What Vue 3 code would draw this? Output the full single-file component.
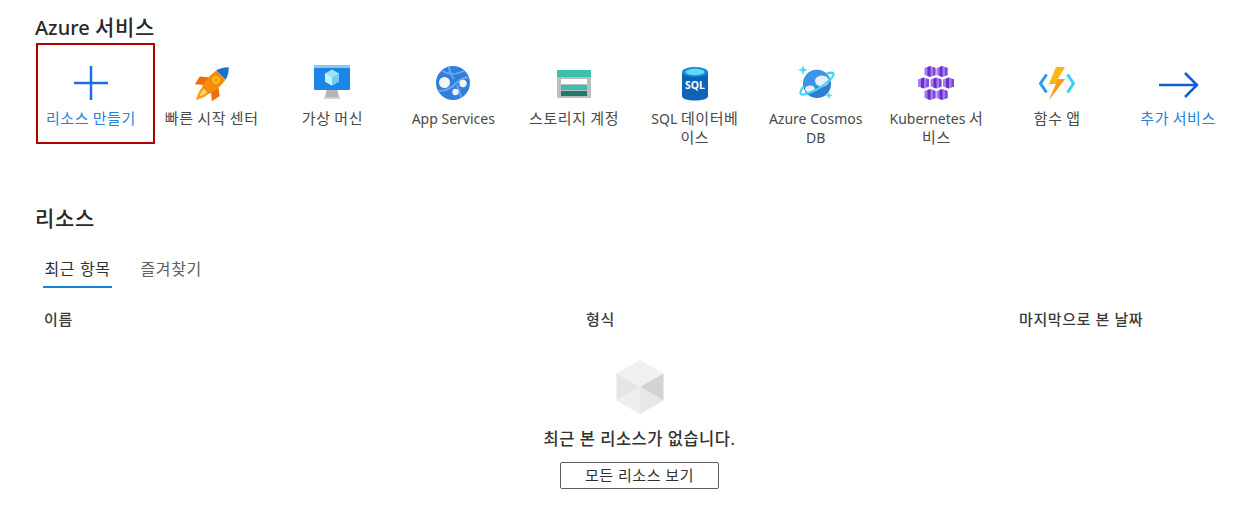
<script setup>
const split = (text) =>
  text.split(/([가-힣]+)/).filter(Boolean).map((t) => ({ t, ko: /[가-힣]/.test(t) }))

const title = split('Azure 서비스')
const services = [
  { key: 'create', lines: ['리소스 만들기'], link: true },
  { key: 'rocket', lines: ['빠른 시작 센터'] },
  { key: 'vm', lines: ['가상 머신'] },
  { key: 'app', lines: ['App Services'] },
  { key: 'storage', lines: ['스토리지 계정'] },
  { key: 'sql', lines: ['SQL 데이터베', '이스'] },
  { key: 'cosmos', lines: ['Azure Cosmos', 'DB'] },
  { key: 'k8s', lines: ['Kubernetes 서', '비스'] },
  { key: 'func', lines: ['함수 앱'] },
  { key: 'more', lines: ['추가 서비스'], link: true }
].map((s) => ({ ...s, rows: s.lines.map(split) }))

const pods = [
  [12, 6.5], [24, 6.5], [5.500, 18], [18, 18], [30.500, 18], [12, 29.500], [24, 29.500]
]
</script>

<template>
  <main class="page">
    <h2 class="heading"><span v-for="(p, i) in title" :key="i" :class="{ ko: p.ko }">{{ p.t }}</span></h2>
    <div class="services">
      <div v-for="s in services" :key="s.key" class="service" :class="{ link: s.link, first: s.key === 'create' }">
        <svg class="icon" viewBox="0 0 36 36" width="36" height="36">
          <template v-if="s.key === 'create'">
            <path d="M18 1v34M1 18h34" stroke="#1a6fe0" stroke-width="2.500" fill="none" />
          </template>
          <template v-else-if="s.key === 'rocket'">
            <g transform="translate(18.500 18.500) rotate(45)">
              <path d="M-6.500-2L-14 4l2 9 7-6z" fill="#ec6f0c" />
              <path d="M6.500-2L14 4l-2 9-7-6z" fill="#ec6f0c" />
              <path d="M-4.500 9C-5 15-1.500 20 0 24c1.500-4 5-9 4.500-15z" fill="#f9a31a" />
              <path d="M-2 9c0 4 1 7 2 9 1-2 2-5 2-9z" fill="#fde27a" />
              <path d="M-6.500-12C-8-4-7 4-5 10H5C7 4 8-4 6.500-12z" fill="#f78a0a" />
              <path d="M0-23c4 4 6 8 6.500 11h-13C-6-15-4-19 0-23z" fill="#1673c9" />
              <circle cx="0" cy="-5" r="3.800" fill="#fcc419" />
              <circle cx="0" cy="-5" r="2.100" fill="#f59a0c" />
            </g>
          </template>
          <template v-else-if="s.key === 'vm'">
            <path d="M12.500 25h11l1.500 7H11z" fill="#b5b5b5" />
            <path d="M10 32h16v2H10z" fill="#d2d2d2" />
            <rect x="0" y="0" width="36" height="25" rx="1" fill="#1b86e8" />
            <path d="M0 1a1 1 0 0 1 1-1h34a1 1 0 0 1 1 1v2H0z" fill="#8cc5f5" />
            <path d="M18 4.500l7 4v8l-7 4-7-4v-8z" fill="#9fe3fb" />
            <path d="M18 12.500v8l-7-4v-8z" fill="#c9f1fd" />
            <path d="M18 12.500v8l7-4v-8z" fill="#6fcdf3" />
          </template>
          <template v-else-if="s.key === 'app'">
            <circle cx="18" cy="18" r="17" fill="#2f80dd" />
            <path d="M7 6c7 4 13 4 22 0M14 2c0 5 3 9 5 12M3 26c8 0 12-2 16-6 4-4 9-7 14-8M22 20c2 5 4 9 4 13" stroke="#6ea9ea" stroke-width="1.800" fill="none" />
            <circle cx="9.500" cy="17.500" r="5.500" fill="#f4f4f4" />
            <circle cx="28" cy="18.500" r="3.700" fill="#f4f4f4" />
            <circle cx="20.500" cy="27" r="3.200" fill="#f4f4f4" />
          </template>
          <template v-else-if="s.key === 'storage'">
            <path d="M1 6a1 1 0 0 1 1-1h32a1 1 0 0 1 1 1v26a1 1 0 0 1-1 1H2a1 1 0 0 1-1-1z" fill="#bdbdbd" />
            <path d="M1 6a1 1 0 0 1 1-1h32a1 1 0 0 1 1 1v6H1z" fill="#3ac1ad" />
            <rect x="5" y="14" width="26" height="5" fill="#fff" />
            <rect x="5" y="20" width="26" height="5" fill="#3ac1ad" />
            <rect x="5" y="26" width="26" height="5" fill="#23776c" />
          </template>
          <template v-else-if="s.key === 'sql'">
            <path d="M5 7v24c0 3 6 4.500 13 4.500S31 34 31 31V7z" fill="#0f62b5" />
            <ellipse cx="18" cy="7" rx="13" ry="5" fill="#1e88d8" />
            <ellipse cx="18" cy="7" rx="9.500" ry="3.200" fill="#5cdcf5" />
            <text x="18" y="24" class="sql" text-anchor="middle">SQL</text>
          </template>
          <template v-else-if="s.key === 'cosmos'">
            <circle cx="19" cy="19" r="14" fill="#2a7ed4" />
            <path d="M7 12c3-6 9-8 15-7 6 2 10 7 10 10-8 6-17 9-25 9-2-4-2-8 0-12z" fill="#3b96e6" />
            <ellipse cx="24" cy="16" rx="7" ry="5.500" fill="#e9eef4" />
            <ellipse cx="12" cy="24" rx="5" ry="3.500" fill="#e9eef4" />
            <path d="M28 9c4-1.500 7-1.500 7.500-.5 1 2.500-6 10-15 15S4 31 2.500 28.500C2 27 3.500 24 6 21" stroke="#42d2f5" stroke-width="2.200" fill="none" />
            <path d="M5 0l1.300 3.700L10 5 6.300 6.300 5 10 3.700 6.300 0 5l3.700-1.300z" fill="#4fd6f7" />
            <path d="M31 27l1 2.600 2.600 1-2.600 1-1 2.400-1-2.400-2.600-1 2.600-1z" fill="#4fd6f7" />
          </template>
          <template v-else-if="s.key === 'k8s'">
            <g v-for="p in pods" :key="p[0] + '-' + p[1]" :transform="`translate(${p[0] - 5.5} ${p[1] - 5.5})`">
              <path d="M0 2l6-2 5 2v7l-5 2-6-2z" fill="#a67af4" />
              <path d="M3 1l3-1v11l-3-1z" fill="#6a2fc4" />
              <path d="M8.500 1l2.500 1v7l-2.500 1z" fill="#7d47d8" />
            </g>
          </template>
          <template v-else-if="s.key === 'func'">
            <path d="M7.500 9.500L1.500 18.500l6 9" stroke="#2d9be8" stroke-width="3" fill="none" />
            <path d="M28.500 9.500l6 9-6 9" stroke="#36d1f5" stroke-width="3" fill="none" />
            <path d="M17 2h9l-7 12h7L10 35l7-16h-7z" fill="#fcb614" />
            <path d="M19 14h7L10 35l7-16z" fill="#f78d1e" opacity=".7" />
          </template>
          <template v-else>
            <path d="M-1 20h38M25 8l12 12-12 12" stroke="#0f5fd8" stroke-width="2.500" fill="none" />
          </template>
        </svg>
        <div class="label">
          <div v-for="(row, r) in s.rows" :key="r" class="row"><span v-for="(p, i) in row" :key="i" :class="{ ko: p.ko }">{{ p.t }}</span></div>
        </div>
      </div>
    </div>

    <h2 class="heading resources"><span class="ko">리소스</span></h2>
    <div class="tabs">
      <span class="tab active">최근 항목</span>
      <span class="tab">즐겨찾기</span>
    </div>

    <div class="cols">
      <span>이름</span>
      <span>형식</span>
      <span>마지막으로 본 날짜</span>
    </div>

    <section class="empty">
      <svg class="cube" viewBox="0 0 48 54" width="48" height="54">
        <path d="M24 0l23.500 13.500L24 27 .5 13.500z" fill="#f0f0f0" />
        <path d="M.5 13.500L24 27 .5 40.500z" fill="#e5e5e5" />
        <path d="M47.500 13.500V40.500L24 27z" fill="#d3d3d3" />
        <path d="M24 27l23.500 13.500L24 54z" fill="#e7e7e7" />
        <path d="M24 27v27L.5 40.500z" fill="#eeeeee" />
      </svg>
      <p class="msg">최근 본 리소스가 없습니다.</p>
      <button class="btn">모든 리소스 보기</button>
    </section>
  </main>
</template>

<style scoped>
.page {
  width: 1233px;
  height: 526px;
  overflow: hidden;
  box-sizing: border-box;
  padding: 13px 0 0 35px;
  background: #fff;
  color: #323130;
  font-family: "Noto Sans", "Noto Sans CJK KR", sans-serif;
}
.heading {
  margin: 0;
  height: 28px;
  font-size: 20px;
  line-height: 28px;
  font-weight: 500;
  color: #292827;
}
.heading .ko {
  font-size: 21px;
  letter-spacing: .7px;
}
.services {
  display: flex;
  margin: 2px 0 0 -4.500px;
}
.service {
  position: relative;
  width: 120.8px;
  flex: none;
  height: 101px;
  display: flex;
  flex-direction: column;
  align-items: center;
  font-size: 14px;
  line-height: 19px;
  color: #4a4948;
}
.service.first::after {
  content: "";
  position: absolute;
  left: 5.500px;
  top: 0;
  width: 119px;
  height: 101px;
  box-sizing: border-box;
  border: 2px solid #b00000;
}
.service.link { color: #2183d9; }
.label .ko {
  font-size: 15px;
  letter-spacing: .6px;
}
.icon {
  margin-top: 22px;
  flex: none;
  overflow: visible;
}
.label {
  margin-top: 8px;
  text-align: center;
}
.row {
  height: 19px;
  white-space: nowrap;
}
.sql {
  font: 700 10.5px "Noto Sans", sans-serif;
  fill: #fff;
}
.resources { margin-top: 60px; }
.tabs {
  display: flex;
  gap: 27px;
  margin: 24px 0 0 8px;
  font-size: 16px;
  letter-spacing: .6px;
}
.tab {
  height: 32px;
  line-height: 26px;
  padding: 0 1.500px;
  box-sizing: border-box;
  color: #5f5e5d;
}
.tab.active {
  color: #323130;
  border-bottom: 2px solid #1b84d8;
}
.cols {
  display: grid;
  grid-template-columns: 542px 433px 1fr;
  margin: 21px 0 0 9px;
  font-size: 15px;
  letter-spacing: .6px;
  line-height: 20px;
  font-weight: 500;
  color: #3b3a39;
}
.empty {
  display: flex;
  flex-direction: column;
  align-items: center;
  width: 1209px;
  margin-top: 31px;
}
.cube { flex: none; }
.msg {
  margin: 14px 0 0;
  font-size: 16.500px;
  letter-spacing: .5px;
  line-height: 22px;
  font-weight: 500;
  color: #323130;
}
.btn {
  margin-top: 12px;
  width: 159px;
  height: 27px;
  padding: 0;
  background: #fff;
  border: 1px solid #605e5c;
  border-radius: 2px;
  font: 400 15px/1 "Noto Sans", "Noto Sans CJK KR", sans-serif;
  letter-spacing: .5px;
  color: #323130;
}
</style>
